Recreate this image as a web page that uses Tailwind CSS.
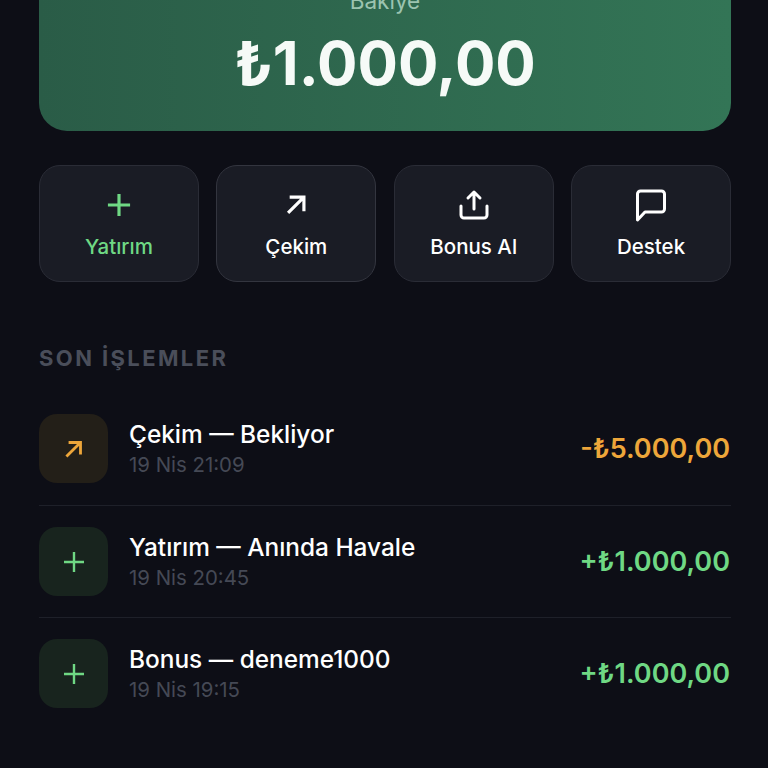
<!DOCTYPE html>
<html lang="en">
<head>
  <meta charset="UTF-8" />
  <title>Cüzdan</title>
  <script src="https://cdn.jsdelivr.net/npm/@tailwindcss/browser@4"></script>
</head>
<body class="bg-[#0d0e16] text-white font-['Inter',sans-serif] h-[768px] overflow-hidden">

  <main class="pl-[39px] pr-[37px]">
    <!-- Balance card -->
    <section class="-mt-[20px] h-[151px] rounded-b-[28px] bg-gradient-to-r from-[#2a5c47] to-[#337556] flex flex-col items-center">
      <p class="text-[22.5px] leading-[24px] mt-[9px] text-[#9cc4b0]">Bakiye</p>
      <p class="font-bold text-[60px] leading-[70px] mt-[15px] text-[#f6faf7]">₺1.000,00</p>
    </section>

    <!-- Actions -->
    <section class="grid grid-cols-4 gap-[17.5px] mt-[34px]">
      <button class="h-[117px] rounded-[21px] bg-[#1a1c25] border border-[#2a2c36] flex flex-col items-center pt-[20px]">
        <svg class="w-[38px] h-[38px] text-[#6fd884]" viewBox="0 0 24 24" fill="none" stroke="currentColor" stroke-width="2"><path d="M12 5v14M5 12h14"/></svg>
        <span class="text-[20.5px] font-medium mt-[11px] leading-[24px] text-[#6fd884]">Yatırım</span>
      </button>
      <button class="h-[117px] rounded-[21px] bg-[#1a1c25] border border-[#33353f] flex flex-col items-center pt-[20px]">
        <svg class="w-[38px] h-[38px] text-white" viewBox="0 0 24 24" fill="none" stroke="currentColor" stroke-width="2"><path d="M7 17 17 7M8 7h9v9"/></svg>
        <span class="text-[20.5px] font-medium mt-[11px] leading-[24px]">Çekim</span>
      </button>
      <button class="h-[117px] rounded-[21px] bg-[#1a1c25] border border-[#2a2c36] flex flex-col items-center pt-[20px]">
        <svg class="w-[38px] h-[38px] text-white" viewBox="0 0 38 38" fill="none" stroke="currentColor" stroke-width="3" stroke-linecap="round" stroke-linejoin="round"><path d="M6 20v9a3 3 0 0 0 3 3h20a3 3 0 0 0 3-3v-9M19 23V6M13 12l6-6 6 6"/></svg>
        <span class="text-[20.5px] font-medium mt-[11px] leading-[24px]">Bonus Al</span>
      </button>
      <button class="h-[117px] rounded-[21px] bg-[#1a1c25] border border-[#2a2c36] flex flex-col items-center pt-[20px]">
        <svg class="w-[38px] h-[38px] text-white" viewBox="0 0 38 38" fill="none" stroke="currentColor" stroke-width="3" stroke-linejoin="round"><path d="M5.5 34V8a3 3 0 0 1 3-3h21a3 3 0 0 1 3 3v15a3 3 0 0 1-3 3H13z"/></svg>
        <span class="text-[20.5px] font-medium mt-[11px] leading-[24px]">Destek</span>
      </button>
    </section>

    <!-- Transactions -->
    <h2 class="mt-[63px] text-[22px] leading-[26px] font-bold tracking-[2.4px] text-[#4a4e5a]">SON İŞLEMLER</h2>

    <ul class="mt-[43px]">
      <li class="h-[92px] border-b border-[#1e2029] flex justify-between">
        <div class="flex gap-[21px]">
          <div class="w-[69px] h-[69px] rounded-[18px] bg-[#231f18] flex items-center justify-center">
            <svg class="w-[26px] h-[26px] text-[#eda63a]" viewBox="0 0 24 24" fill="none" stroke="currentColor" stroke-width="2.6"><path d="M5 19 18 6M7 6h11v11"/></svg>
          </div>
          <div class="pt-[5px]">
            <p class="text-[24.4px] leading-[30px] font-medium">Çekim — Bekliyor</p>
            <p class="text-[20.4px] leading-[25px] mt-[3px] text-[#454955]">19 Nis 21:09</p>
          </div>
        </div>
        <p class="text-[27px] leading-[69px] mr-[1px] font-semibold text-[#eda63a]">-₺5.000,00</p>
      </li>
      <li class="h-[112px] pt-[21px] border-b border-[#1e2029] flex justify-between">
        <div class="flex gap-[21px]">
          <div class="w-[69px] h-[69px] rounded-[18px] bg-[#18241e] flex items-center justify-center">
            <svg class="w-[24px] h-[24px] text-[#6fd884]" viewBox="0 0 24 24" fill="none" stroke="currentColor" stroke-width="2.4"><path d="M12 2v20M2 12h20"/></svg>
          </div>
          <div class="pt-[5px]">
            <p class="text-[24.4px] leading-[30px] font-medium">Yatırım — Anında Havale</p>
            <p class="text-[20.4px] leading-[25px] mt-[3px] text-[#454955]">19 Nis 20:45</p>
          </div>
        </div>
        <p class="text-[27px] leading-[69px] mr-[1px] font-semibold text-[#6fd884]">+₺1.000,00</p>
      </li>
      <li class="h-[112px] pt-[21px] flex justify-between">
        <div class="flex gap-[21px]">
          <div class="w-[69px] h-[69px] rounded-[18px] bg-[#18241e] flex items-center justify-center">
            <svg class="w-[24px] h-[24px] text-[#6fd884]" viewBox="0 0 24 24" fill="none" stroke="currentColor" stroke-width="2.4"><path d="M12 2v20M2 12h20"/></svg>
          </div>
          <div class="pt-[5px]">
            <p class="text-[24.4px] leading-[30px] font-medium">Bonus — deneme1000</p>
            <p class="text-[20.4px] leading-[25px] mt-[3px] text-[#454955]">19 Nis 19:15</p>
          </div>
        </div>
        <p class="text-[27px] leading-[69px] mr-[1px] font-semibold text-[#6fd884]">+₺1.000,00</p>
      </li>
    </ul>
  </main>

</body>
</html>
